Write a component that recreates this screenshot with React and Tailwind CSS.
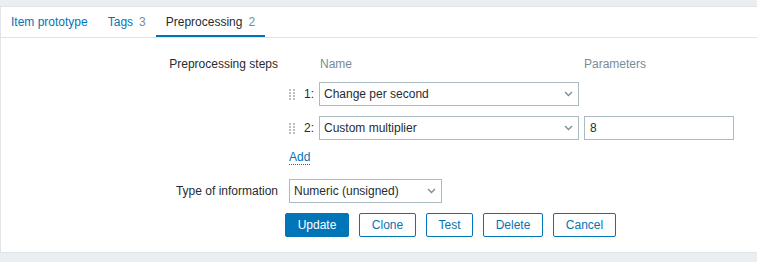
const steps = [
  { num: '1:', name: 'Change per second', param: null },
  { num: '2:', name: 'Custom multiplier', param: '8' },
]

function Chevron() {
  return (
    <svg width="9" height="6" viewBox="0 0 9 6" className="shrink-0">
      <path d="M1 1l3.5 3.5L8 1" fill="none" stroke="#768d99" strokeWidth="1.3" />
    </svg>
  )
}

function Handle() {
  return (
    <svg width="6" height="11" viewBox="0 0 6 11" className="shrink-0">
      {[0, 3, 6, 9].map((y) => (
        <g key={y} fill="#b7c2c8">
          <rect x="0" y={y} width="2" height="2" />
          <rect x="4" y={y} width="2" height="2" />
        </g>
      ))}
    </svg>
  )
}

function Select({ value, className }) {
  return (
    <div
      className={`flex h-[24px] items-center justify-between border border-[#acbbc2] bg-white pl-[4px] pr-[5px] text-[#1f2c33] ${className}`}
    >
      <span>{value}</span>
      <Chevron />
    </div>
  )
}

function Tab({ label, count, active }) {
  return (
    <div
      className={`flex h-[30px] items-center border-b-2 px-[10px] pt-[1px] ${
        active ? 'border-[#0275b8] text-[#1f2c33]' : 'border-transparent text-[#0275b8]'
      }`}
    >
      {label}
      {count && <span className="ml-[6px] text-[#768d99]">{count}</span>}
    </div>
  )
}

function Button({ children, primary, className }) {
  return (
    <button
      type="button"
      className={`flex h-[24px] items-center justify-center rounded-[2px] border border-[#0275b8] ${
        primary ? 'bg-[#0275b8] text-white' : 'bg-white text-[#0275b8]'
      } ${className}`}
    >
      {children}
    </button>
  )
}

export default function App() {
  return (
    <div className="h-[262px] w-full overflow-hidden bg-[#ebeef0] pt-[6px] font-['Liberation_Sans',Arial,sans-serif] text-[12px] leading-[14px]">
      <div className="border-y border-l border-[#dfe4e7] bg-white">
        <div className="flex border-b border-[#dfe4e7]">
          <Tab label="Item prototype" />
          <Tab label="Tags" count="3" />
          <Tab label="Preprocessing" count="2" active />
        </div>

        <div className="grid grid-cols-[277px_1fr] gap-x-[11px] pt-[16px] pb-[15px]">
          <div className="flex h-[20px] items-center justify-end text-[#1f2c33]">Preprocessing steps</div>
          <div className="flex flex-col">
            <div className="flex h-[20px] items-center text-[#768d99]">
              <span className="ml-[30px] w-[265px] pl-[1px]">Name</span>
              <span>Parameters</span>
            </div>
            <div className="mt-[8px] flex flex-col gap-[10px]">
              {steps.map((step) => (
                <div key={step.num} className="flex h-[24px] items-center">
                  <Handle />
                  <span className="w-[19px] text-right text-[#1f2c33]">{step.num}</span>
                  <Select value={step.name} className="ml-[5px] w-[260px]" />
                  {step.param && (
                    <div className="ml-[5px] flex h-[24px] w-[150px] items-center border border-[#acbbc2] pl-[5px] text-[#1f2c33]">
                      {step.param}
                    </div>
                  )}
                </div>
              ))}
            </div>
            <div className="mt-[7px] flex h-[20px] items-center">
              <span className="border-b border-dotted border-[#0275b8] text-[#0275b8]">Add</span>
            </div>
          </div>

          <div className="mt-[12px] flex h-[24px] items-center justify-end text-[#1f2c33]">Type of information</div>
          <div className="mt-[12px]">
            <Select value="Numeric (unsigned)" className="w-[153px]" />
          </div>

          <div />
          <div className="mt-[10px] -ml-[4px] flex gap-[10px]">
            <Button primary className="w-[64px]">Update</Button>
            <Button className="w-[57px]">Clone</Button>
            <Button className="w-[47px]">Test</Button>
            <Button className="w-[60px]">Delete</Button>
            <Button className="w-[63px]">Cancel</Button>
          </div>
        </div>
      </div>
    </div>
  )
}
